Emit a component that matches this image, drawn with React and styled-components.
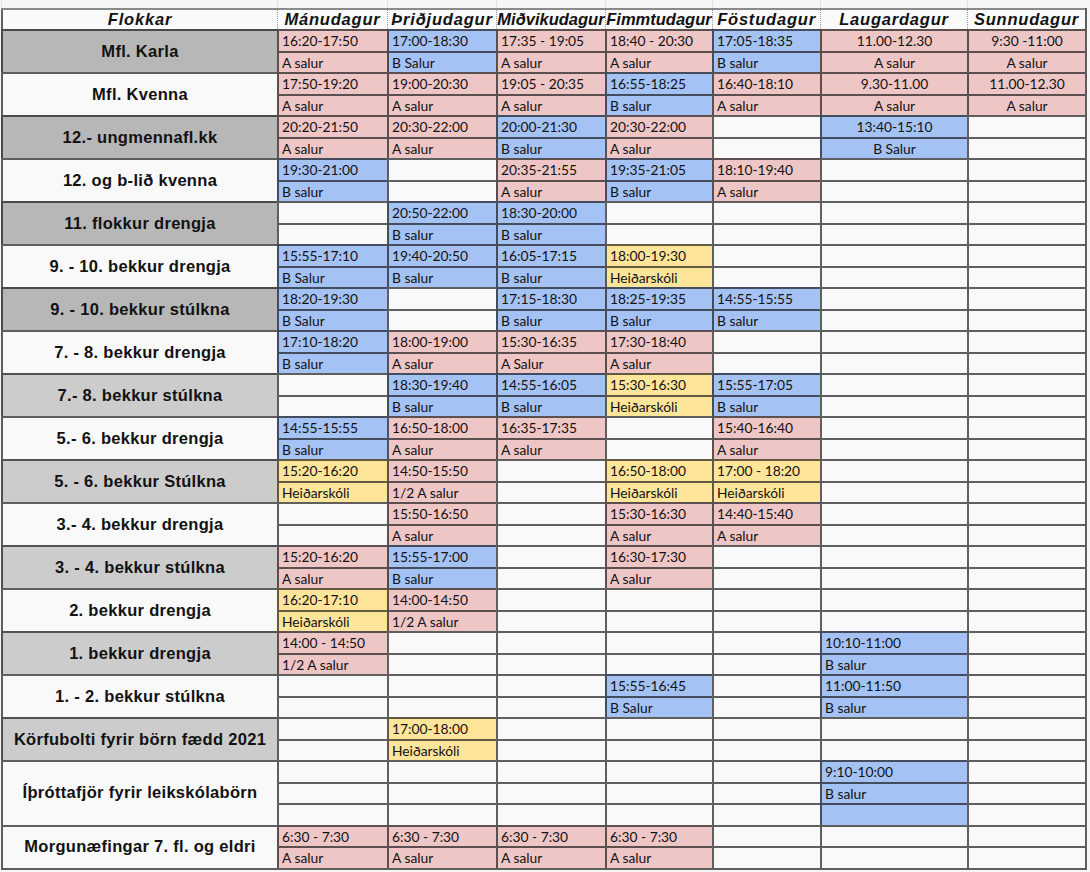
import React from 'react';
import styled, { createGlobalStyle } from 'styled-components';

// --- palette (spreadsheet fills) ---
const tones = {
  p: '#efc6c6', // pink, A salur
  b: '#a4c2f4', // blue, B salur
  y: '#ffe599', // yellow, Heiðarskóli
  none: '#f9f9f9',
};

const shades = {
  dark: '#b7b7b7',
  light: '#cccccc',
  white: '#f9f9f9',
};

const LINE = 'rgba(22, 22, 22, 0.68)';
const COLS = '276px 110px 109px 109px 107px 108px 147px 118px';
const SLOT_H = 21.5;

const GlobalStyle = createGlobalStyle`
  body {
    margin: 0;
    background: #f6f6f6;
    color: #121212;
  }
`;

const Page = styled.div`
  padding-left: 1px;
  width: 1090px;
  height: 872px;
  overflow: hidden;
`;

const TopStrip = styled.div`
  display: grid;
  grid-template-columns: ${COLS};
  height: 7.5px;
  width: 1088px;
`;

const StripCell = styled.div`
  border-left: 1px solid #e2e2e2;
`;

const Table = styled.div`
  width: 1084px;
  border-right: 2px solid ${LINE};
  border-bottom: 2px solid ${LINE};
`;

const HeaderRow = styled.div`
  display: grid;
  grid-template-columns: ${COLS};
  height: ${SLOT_H}px;
  background: #fafafa;
  border-top: 2px solid #8a8a8a;
  box-sizing: border-box;
`;

const HeadCell = styled.div`
  display: flex;
  align-items: center;
  justify-content: center;
  white-space: nowrap;
  overflow: visible;
  border-left: ${p => (p.$first ? `2px solid ${LINE}` : '1px dotted #9a9a9a')};
  font-family: 'Liberation Sans', Arial, sans-serif;
  font-weight: bold;
  font-style: italic;
  font-size: 16.5px;
  letter-spacing: ${p => (p.$tight ? '0px' : '0.8px')};
`;

const GroupRow = styled.div`
  display: grid;
  grid-template-columns: ${COLS};
  height: ${p => p.$slots * SLOT_H}px;
`;

const Label = styled.div`
  display: flex;
  align-items: center;
  justify-content: center;
  box-sizing: border-box;
  border-top: 2px solid ${LINE};
  border-left: 2px solid ${LINE};
  background: ${p => shades[p.$shade]};
  font-family: 'Liberation Sans', Arial, sans-serif;
  font-weight: bold;
  font-size: 16.5px;
  letter-spacing: 0.3px;
  white-space: nowrap;
  padding-bottom: 1px;
`;

const DayCol = styled.div`
  display: flex;
  flex-direction: column;
`;

const Slot = styled.div`
  height: ${SLOT_H}px;
  box-sizing: border-box;
  border-top: 2px solid ${LINE};
  border-left: 2px solid ${LINE};
  background: ${p => tones[p.$tone]};
  display: flex;
  align-items: center;
  justify-content: ${p => (p.$center ? 'center' : 'flex-start')};
  padding: 0 3px;
  font-family: Lato, 'Open Sans', sans-serif;
  font-size: 13.8px;
  white-space: nowrap;
  overflow: hidden;
`;

const DAYS = ['Mánudagur', 'Þriðjudagur', 'Miðvikudagur', 'Fimmtudagur', 'Föstudagur', 'Laugardagur', 'Sunnudagur'];

const E = (tone, ...lines) => ({ tone, lines });
const C = (tone, ...lines) => ({ tone, lines, center: true });
const _ = null;

const groups = [
  { label: 'Mfl. Karla', shade: 'dark', days: [E('p', '16:20-17:50', 'A salur'), E('b', '17:00-18:30', 'B Salur'), E('p', '17:35 - 19:05', 'A salur'), E('p', '18:40 - 20:30', 'A salur'), E('b', '17:05-18:35', 'B salur'), C('p', '11.00-12.30', 'A salur'), C('p', '9:30 -11:00', 'A salur')] },
  { label: 'Mfl. Kvenna', shade: 'white', days: [E('p', '17:50-19:20', 'A salur'), E('p', '19:00-20:30', 'A salur'), E('p', '19:05 - 20:35', 'A salur'), E('b', '16:55-18:25', 'B salur'), E('p', '16:40-18:10', 'A salur'), C('p', '9.30-11.00', 'A salur'), C('p', '11.00-12.30', 'A salur')] },
  { label: '12.- ungmennafl.kk', shade: 'dark', days: [E('p', '20:20-21:50', 'A salur'), E('p', '20:30-22:00', 'A salur'), E('b', '20:00-21:30', 'B salur'), E('p', '20:30-22:00', 'A salur'), _, C('b', '13:40-15:10', 'B Salur'), _] },
  { label: '12. og b-lið kvenna', shade: 'white', days: [E('b', '19:30-21:00', 'B salur'), _, E('p', '20:35-21:55', 'A salur'), E('b', '19:35-21:05', 'B salur'), E('p', '18:10-19:40', 'A salur'), _, _] },
  { label: '11. flokkur drengja', shade: 'dark', days: [_, E('b', '20:50-22:00', 'B salur'), E('b', '18:30-20:00', 'B salur'), _, _, _, _] },
  { label: '9. - 10. bekkur drengja', shade: 'white', days: [E('b', '15:55-17:10', 'B Salur'), E('b', '19:40-20:50', 'B salur'), E('b', '16:05-17:15', 'B salur'), E('y', '18:00-19:30', 'Heiðarskóli'), _, _, _] },
  { label: '9. - 10. bekkur stúlkna', shade: 'dark', days: [E('b', '18:20-19:30', 'B Salur'), _, E('b', '17:15-18:30', 'B salur'), E('b', '18:25-19:35', 'B salur'), E('b', '14:55-15:55', 'B salur'), _, _] },
  { label: '7. - 8. bekkur drengja', shade: 'white', days: [E('b', '17:10-18:20', 'B salur'), E('p', '18:00-19:00', 'A salur'), E('p', '15:30-16:35', 'A Salur'), E('p', '17:30-18:40', 'A salur'), _, _, _] },
  { label: '7.- 8. bekkur stúlkna', shade: 'light', days: [_, E('b', '18:30-19:40', 'B salur'), E('b', '14:55-16:05', 'B salur'), E('y', '15:30-16:30', 'Heiðarskóli'), E('b', '15:55-17:05', 'B salur'), _, _] },
  { label: '5.- 6. bekkur drengja', shade: 'white', days: [E('b', '14:55-15:55', 'B salur'), E('p', '16:50-18:00', 'A salur'), E('p', '16:35-17:35', 'A salur'), _, E('p', '15:40-16:40', 'A salur'), _, _] },
  { label: '5. - 6. bekkur Stúlkna', shade: 'light', days: [E('y', '15:20-16:20', 'Heiðarskóli'), E('p', '14:50-15:50', '1/2 A salur'), _, E('y', '16:50-18:00', 'Heiðarskóli'), E('y', '17:00 - 18:20', 'Heiðarskóli'), _, _] },
  { label: '3.- 4. bekkur drengja', shade: 'white', days: [_, E('p', '15:50-16:50', 'A salur'), _, E('p', '15:30-16:30', 'A salur'), E('p', '14:40-15:40', 'A salur'), _, _] },
  { label: '3. - 4. bekkur stúlkna', shade: 'light', days: [E('p', '15:20-16:20', 'A salur'), E('b', '15:55-17:00', 'B salur'), _, E('p', '16:30-17:30', 'A salur'), _, _, _] },
  { label: '2. bekkur drengja', shade: 'white', days: [E('y', '16:20-17:10', 'Heiðarskóli'), E('p', '14:00-14:50', '1/2 A salur'), _, _, _, _, _] },
  { label: '1. bekkur drengja', shade: 'light', days: [E('p', '14:00 - 14:50', '1/2 A salur'), _, _, _, _, E('b', '10:10-11:00', 'B salur'), _] },
  { label: '1. - 2. bekkur stúlkna', shade: 'white', days: [_, _, _, E('b', '15:55-16:45', 'B Salur'), _, E('b', '11:00-11:50', 'B salur'), _] },
  { label: 'Körfubolti fyrir börn fædd 2021', shade: 'light', days: [_, E('y', '17:00-18:00', 'Heiðarskóli'), _, _, _, _, _] },
  { label: 'Íþróttafjör fyrir leikskólabörn', shade: 'white', slots: 3, days: [_, _, _, _, _, E('b', '9:10-10:00', 'B salur', ''), _] },
  { label: 'Morgunæfingar 7. fl. og eldri', shade: 'white', days: [E('p', '6:30 - 7:30', 'A salur'), E('p', '6:30 - 7:30', 'A salur'), E('p', '6:30 - 7:30', 'A salur'), E('p', '6:30 - 7:30', 'A salur'), _, _, _] },
];

const Group = ({ group }) => {
  const n = group.slots || 2;
  return (
    <GroupRow $slots={n}>
      <Label $shade={group.shade}>{group.label}</Label>
      {group.days.map((entry, d) => (
        <DayCol key={d}>
          {Array.from({ length: n }, (_x, i) => (
            <Slot key={i} $tone={entry ? entry.tone : 'none'} $center={entry && entry.center}>
              {entry ? entry.lines[i] : ''}
            </Slot>
          ))}
        </DayCol>
      ))}
    </GroupRow>
  );
};

export default function App() {
  return (
    <Page>
      <GlobalStyle />
      <TopStrip>
        {Array.from({ length: 8 }, (_x, i) => <StripCell key={i} />)}
      </TopStrip>
      <Table>
        <HeaderRow>
          <HeadCell $first>Flokkar</HeadCell>
          {DAYS.map(day => (
            <HeadCell key={day} $tight={day === 'Miðvikudagur' || day === 'Fimmtudagur'}>{day}</HeadCell>
          ))}
        </HeaderRow>
        {groups.map(g => <Group key={g.label} group={g} />)}
      </Table>
    </Page>
  );
}
